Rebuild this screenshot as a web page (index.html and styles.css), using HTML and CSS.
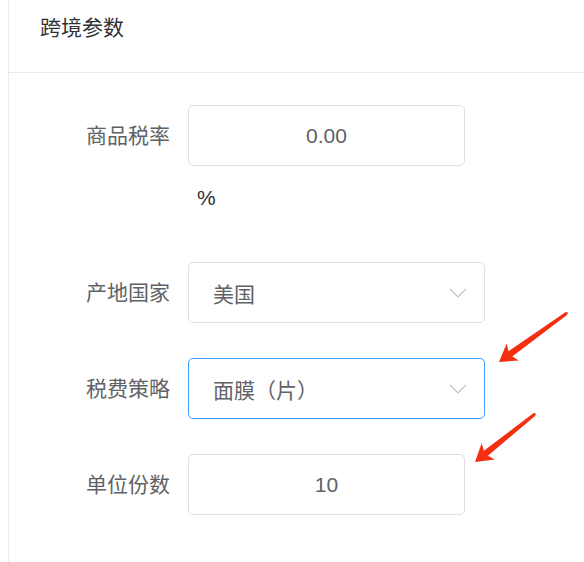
FILE: index.html
```
<html>
<head>
  <title>跨境参数</title>
  <link rel="stylesheet" href="styles.css">
</head>
<body>
  <div class="panel">
    <div class="panel-header">跨境参数</div>

    <form class="form">
      <div class="form-item">
        <label class="form-label">商品税率</label>
        <div class="form-content">
          <input class="input" type="text" value="0.00">
          <div class="unit">%</div>
        </div>
      </div>

      <div class="form-item">
        <label class="form-label">产地国家</label>
        <div class="form-content">
          <div class="select">
            <span>美国</span>
            <svg class="chevron" width="18" height="10" viewBox="0 0 18 10"><path d="M1 1 L9 9 L17 1" fill="none" stroke="#c0c4cc" stroke-width="1.2"/></svg>
          </div>
        </div>
      </div>

      <div class="form-item">
        <label class="form-label">税费策略</label>
        <div class="form-content">
          <div class="select is-focus">
            <span>面膜（片）</span>
            <svg class="chevron" width="18" height="10" viewBox="0 0 18 10"><path d="M1 1 L9 9 L17 1" fill="none" stroke="#c0c4cc" stroke-width="1.2"/></svg>
          </div>
        </div>
      </div>

      <div class="form-item">
        <label class="form-label">单位份数</label>
        <div class="form-content">
          <input class="input" type="text" value="10">
        </div>
      </div>
    </form>
  </div>

  <!-- annotation arrows -->
  <svg class="marks" width="584" height="562" viewBox="0 0 584 562">
    <g transform="translate(499 362) rotate(144.2)">
      <polygon points="0,0 -17,-10.5 -14,-3.2 -83,-1.6 -85,0 -83,1.6 -14,3.2 -17,10.5" fill="#f42f10"/>
    </g>
    <g transform="translate(475 462) rotate(141.3)">
      <polygon points="0,0 -17,-10.5 -14,-3.2 -76,-1.6 -78,0 -76,1.6 -14,3.2 -17,10.5" fill="#f42f10"/>
    </g>
  </svg>
</body>
</html>
```

FILE: styles.css
```
body {
  margin: 0;
  background: #ffffff;
  font-family: "Liberation Sans", "Noto Sans CJK SC", sans-serif;
  color: #606266;
}

.panel {
  margin-left: 8px;
  border-left: 1px solid #e8eaef;
  min-height: 562px;
}

.panel-header {
  box-sizing: border-box;
  height: 73px;
  padding: 10px 0 0 31px;
  line-height: 36px;
  font-size: 21px;
  color: #303133;
  border-bottom: 1px solid #e8eaef;
}

.form {
  margin: 0;
  padding-top: 32px;
}

.form-item {
  display: flex;
  align-items: flex-start;
  margin-bottom: 35px;
}

.form-label {
  width: 161px;
  margin-right: 18px;
  text-align: right;
  font-size: 21px;
  line-height: 61px;
  color: #606266;
}

.form-content {
  display: flex;
  flex-direction: column;
}

.input {
  box-sizing: border-box;
  width: 277px;
  height: 61px;
  border: 1px solid #dcdfe6;
  border-radius: 5px;
  padding: 0 10px;
  text-align: center;
  font-family: inherit;
  font-size: 21px;
  color: #606266;
  outline: none;
}

.unit {
  margin-top: 20px;
  margin-bottom: 17px;
  padding-left: 9px;
  line-height: 24px;
  font-size: 21px;
  color: #303133;
}

.select {
  box-sizing: border-box;
  width: 297px;
  height: 61px;
  border: 1px solid #dcdfe6;
  border-radius: 5px;
  padding: 0 17px 0 24px;
  display: flex;
  align-items: center;
  justify-content: space-between;
  font-size: 21px;
  color: #606266;
}

.select.is-focus {
  border-color: #409eff;
}

.marks {
  position: absolute;
  top: 0;
  left: 0;
  pointer-events: none;
}
```
